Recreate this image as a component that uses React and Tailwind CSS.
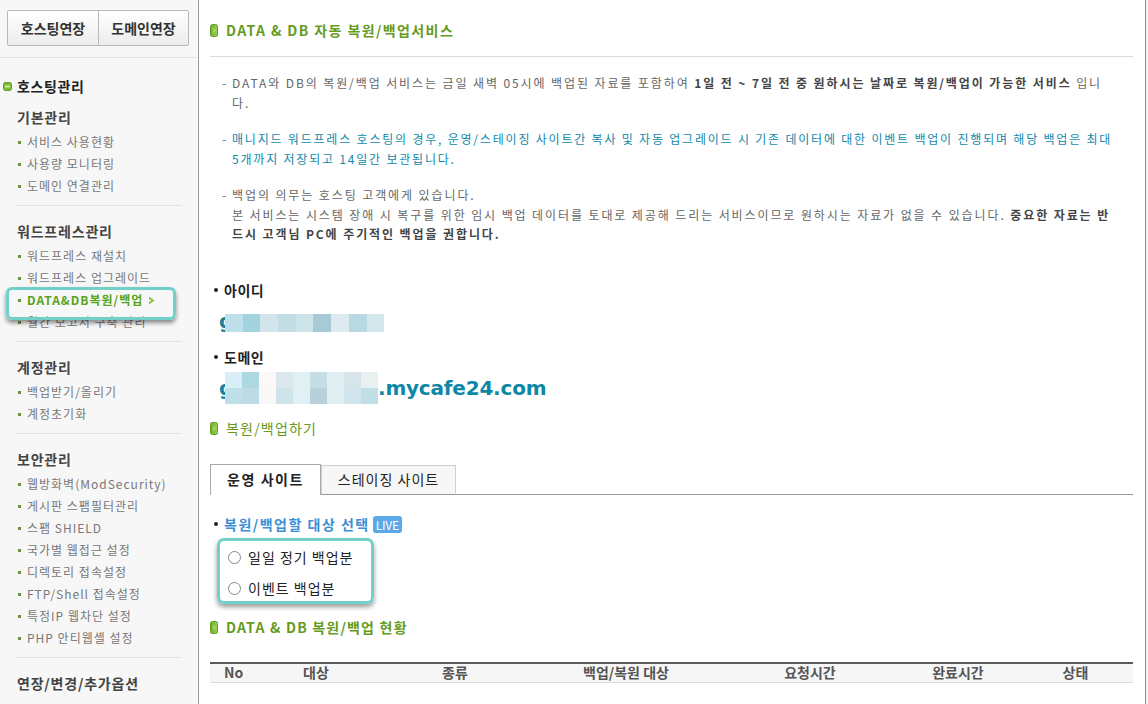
import React from 'react';

const groups = [
  { title: '기본관리', items: ['서비스 사용현황', '사용량 모니터링', '도메인 연결관리'] },
  {
    title: '워드프레스관리',
    items: ['워드프레스 재설치', '워드프레스 업그레이드', 'DATA&DB복원/백업', '월간 보고서 구축 관리'],
    active: 2,
  },
  { title: '계정관리', items: ['백업받기/올리기', '계정초기화'] },
  {
    title: '보안관리',
    items: [
      '웹방화벽(ModSecurity)',
      '게시판 스팸필터관리',
      '스팸 SHIELD',
      '국가별 웹접근 설정',
      '디렉토리 접속설정',
      'FTP/Shell 접속설정',
      '특정IP 웹차단 설정',
      'PHP 안티웹셸 설정',
    ],
  },
  { title: '연장/변경/추가옵션', items: [] },
];

const idBlur = ['#bfe0ea', '#a3d3df', '#d2e5ec', '#c3dde5', '#cce3e8', '#a6cad6', '#deeaef', '#b8d9e2', '#d3e6eb'];
const domBlurTop = ['#d9eef6', '#acd8e2', '#fcf8f8', '#dce8ee', '#e1f0f1', '#c5dee5', '#e1eef2', '#d7e5eb', '#e8f0f0'];
const domBlurBottom = ['#bde0ea', '#bcdbe4', '#faf7f8', '#cfe3ea', '#e0f0f4', '#b8d0d9', '#e0eef2', '#d0e6ec', '#c0dfe6'];

const columns = [
  { label: 'No', w: 'w-[50px]', align: 'text-left pl-[14px]' },
  { label: '대상', w: 'w-[112px]', align: 'text-center' },
  { label: '종류', w: 'w-[166px]', align: 'text-center' },
  { label: '백업/복원 대상', w: 'w-[176px]', align: 'text-center' },
  { label: '요청시간', w: 'w-[192px]', align: 'text-center' },
  { label: '완료시간', w: 'w-[104px]', align: 'text-center' },
  { label: '상태', w: 'flex-1', align: 'text-center pl-[8px]' },
];

const TitleIcon = () => (
  <svg width="8" height="13" viewBox="0 0 8 13" className="shrink-0">
    <defs>
      <linearGradient id="tg" x1="0" y1="0" x2="1" y2="0">
        <stop offset="0" stopColor="#6fae2a" />
        <stop offset="1" stopColor="#9ccf55" />
      </linearGradient>
    </defs>
    <rect x="0.5" y="0.5" width="7" height="12" rx="2" fill="url(#tg)" stroke="#5e9a22" />
    <path d="M3 4.5 L5 6.5 L3 8.5" fill="none" stroke="#d9f0b8" strokeWidth="1" />
  </svg>
);

const SectionTitle = ({ children, bold, track }) => (
  <div className="flex items-center gap-[8px] h-[20px]">
    <TitleIcon />
    <span className={`text-[14px] text-[#669b1e] ${track} ${bold ? 'font-bold' : ''}`}>{children}</span>
  </div>
);

const Bullet = () => <span className="inline-block w-[4px] h-[4px] rounded-full bg-[#222] mr-[6px] mb-[2px]" />;

const Radio = ({ label }) => (
  <label className="flex items-center gap-[7px] h-[31px] text-[14px] tracking-[1px] text-[#222]">
    <span className="w-[13px] h-[13px] rounded-full border border-[#888] bg-white" />
    {label}
  </label>
);

const Sidebar = () => (
  <aside className="w-[199px] shrink-0 bg-[#f7f7f7] border-r border-[#9a9a9a] h-full">
    <div className="pt-[10px] pl-[7px]">
      <div className="flex w-[182px] h-[36px] border border-[#b9b9b9] rounded-[2px] overflow-hidden">
        <div className="w-[91px] flex items-center justify-center bg-gradient-to-b from-white to-[#ececec] border-r border-[#b9b9b9] text-[14px] font-bold text-[#333]">
          호스팅연장
        </div>
        <div className="flex-1 flex items-center justify-center bg-gradient-to-b from-white to-[#ececec] text-[14px] font-bold text-[#333]">
          도메인연장
        </div>
      </div>
    </div>
    <div className="mt-[11px] border-t border-[#e3e3e3]" />
    <div className="pt-[17px] pl-[3px] flex items-center gap-[5px] h-[39px]">
      <svg width="9" height="9" viewBox="0 0 9 9">
        <rect x="0.5" y="0.5" width="8" height="8" rx="2" fill="#7cba3a" stroke="#5f9a24" />
        <rect x="2" y="3.5" width="5" height="2" fill="#c8e8a4" />
      </svg>
      <span className="text-[14px] font-bold text-[#222] tracking-[0.6px]">호스팅관리</span>
    </div>
    {groups.map((g, gi) => (
      <div key={g.title}>
        {gi > 0 && <div className="mx-[16px] border-t border-[#e3e3e3]" />}
        <div className={`${gi === 0 ? 'pt-[9px]' : 'pt-[14px]'} pb-[8px] pl-[17px]`}>
          <div className="h-[22px] flex items-center text-[14px] font-bold text-[#444] tracking-[0.8px]">{g.title}</div>
          <ul className="mt-[3px]">
            {g.items.map((it, i) => (
              <li key={it} className="relative h-[22px] flex items-center text-[12px] tracking-[1px]">
                <span className="w-[3px] h-[3px] bg-[#6f9440] ml-[1px] mr-[6px]" />
                {g.active === i ? (
                  <>
                    <span className="font-bold text-[#58a316]">{it}</span>
                    <svg width="8" height="9" viewBox="0 0 8 9" className="ml-[5px]">
                      <path d="M1 0.5 L6.5 4.5 L1 8.5 L1 6 L3.5 4.5 L1 3 Z" fill="#8cbf3c" />
                    </svg>
                    <span className="absolute left-[-11px] top-[-2px] w-[170px] h-[33px] rounded-[6px] border-[3px] border-[#72d0c9] shadow-[0_3px_4px_rgba(0,0,0,0.45)] pointer-events-none z-10" />
                  </>
                ) : (
                  <span className="text-[#777]">{it}</span>
                )}
              </li>
            ))}
          </ul>
        </div>
      </div>
    ))}
  </aside>
);

const Main = () => (
  <main className="w-[947px] shrink-0 bg-white border-r border-[#8a8a8a] h-full pl-[11px] pr-[12px] pt-[20px]">
    <SectionTitle bold track="tracking-[1.4px]">DATA &amp; DB 자동 복원/백업서비스</SectionTitle>
    <div className="mt-[16px] border-t border-[#dcdcdc]" />

    <div className="mt-[16px] pl-[12px] text-[12px] leading-[19.5px] tracking-[1.9px] text-[#666] whitespace-nowrap">
      <p className="flex">
        <span className="w-[10px] shrink-0">-</span>
        <span>
          DATA와 DB의 복원/백업 서비스는 금일 새벽 05시에 백업된 자료를 포함하여{' '}
          <b className="text-[#444]">1일 전 ~ 7일 전 중 원하시는 날짜로 복원/백업이 가능한 서비스</b> 입니
          <br />
          다.
        </span>
      </p>
      <p className="flex mt-[17px] text-[#0f89aa] tracking-[1.8px]">
        <span className="w-[10px] shrink-0">-</span>
        <span>
          매니지드 워드프레스 호스팅의 경우, 운영/스테이징 사이트간 복사 및 자동 업그레이드 시 기존 데이터에 대한 이벤트 백업이 진행되며 해당 백업은 최대
          <br />
          5개까지 저장되고 14일간 보관됩니다.
        </span>
      </p>
      <p className="flex mt-[17px]">
        <span className="w-[10px] shrink-0">-</span>
        <span>
          백업의 의무는 호스팅 고객에게 있습니다.
          <br />
          본 서비스는 시스템 장애 시 복구를 위한 임시 백업 데이터를 토대로 제공해 드리는 서비스이므로 원하시는 자료가 없을 수 있습니다.{' '}
          <b className="text-[#444]">중요한 자료는 반</b>
          <br />
          <b className="text-[#444]">드시 고객님 PC에 주기적인 백업을 권합니다.</b>
        </span>
      </p>
    </div>

    <div className="mt-[36px] pl-[4px] h-[22px] flex items-center text-[14px] font-bold text-[#222] tracking-[0.5px]">
      <Bullet />
      아이디
    </div>
    <div className="mt-[12px] h-[18px] relative">
      <span className="absolute left-[9px] top-[-8px] text-[20px] font-bold text-[#1b7f98] font-['DejaVu_Sans',sans-serif]">g</span>
      <div className="relative flex ml-[15px]">
        {idBlur.map((c, i) => (
          <span key={i} className="w-[17.7px] h-[18px]" style={{ backgroundColor: c }} />
        ))}
      </div>
    </div>
    <div className="mt-[15px] pl-[4px] h-[22px] flex items-center text-[14px] font-bold text-[#222] tracking-[0.5px]">
      <Bullet />
      도메인
    </div>
    <div className="mt-[3px] pl-[9px] h-[32px] relative flex items-center">
      <span className="text-[20px] font-bold text-[#0d87a5] font-['DejaVu_Sans',sans-serif] tracking-[-0.2px]">
        <span className="inline-block w-[159px]">g</span>.mycafe24.com
      </span>
      <div className="absolute left-[15px] top-0 flex flex-col">
        <div className="flex">
          {domBlurTop.map((c, i) => (
            <span key={i} className="w-[17px] h-[16px]" style={{ backgroundColor: c }} />
          ))}
        </div>
        <div className="flex">
          {domBlurBottom.map((c, i) => (
            <span key={i} className="w-[17px] h-[16px]" style={{ backgroundColor: c }} />
          ))}
        </div>
      </div>
    </div>

    <div className="mt-[15px]">
      <SectionTitle track="tracking-[1.2px]">복원/백업하기</SectionTitle>
    </div>

    <div className="mt-[25px] flex items-end">
      <div className="w-[111px] h-[31px] flex items-center justify-center border border-b-0 border-[#a9a9a9] bg-white text-[14px] font-bold text-[#222] tracking-[1.6px]">
        운영 사이트
      </div>
      <div className="w-[135px] h-[30px] flex items-center justify-center border border-[#cfcfcf] border-b-[#999] bg-[#f7f7f7] text-[14px] text-[#222] tracking-[1px]">
        스테이징 사이트
      </div>
      <div className="flex-1 border-b border-[#999]" />
    </div>

    <div className="mt-[20px] pl-[4px] h-[20px] flex items-center text-[14px] font-bold text-[#3c8ed8] tracking-[1.5px]">
      <Bullet />
      복원/백업할 대상 선택
      <span className="ml-[3px] h-[17px] px-[3px] rounded-[3px] bg-[#5aa9e8] text-white text-[12px] font-normal leading-[17px] tracking-[-0.2px]">
        LIVE
      </span>
    </div>
    <div className="relative mt-[7px] ml-[18px] w-[140px]">
      <Radio label="일일 정기 백업분" />
      <Radio label="이벤트 백업분" />
      <span className="absolute left-[-11px] top-[-4px] w-[157px] h-[66px] rounded-[7px] border-[3px] border-[#72d0c9] shadow-[0_3px_5px_rgba(0,0,0,0.4)] pointer-events-none" />
    </div>

    <div className="mt-[14px]">
      <SectionTitle bold track="tracking-[1.2px]">DATA &amp; DB 복원/백업 현황</SectionTitle>
    </div>

    <div className="mt-[24px] border-t-2 border-[#5a5a5a] border-b border-b-[#dddddd] bg-[#f6f6f6] h-[21px] flex items-center text-[14px] font-bold text-[#555]">
      {columns.map((c) => (
        <div key={c.label} className={`${c.w} ${c.align} shrink-0`}>
          {c.label}
        </div>
      ))}
    </div>
  </main>
);

export default function App() {
  return (
    <div className="flex h-[704px] w-[1148px] overflow-hidden bg-[#f2f2f2] font-['Noto_Sans_CJK_KR',sans-serif]">
      <Sidebar />
      <Main />
    </div>
  );
}
